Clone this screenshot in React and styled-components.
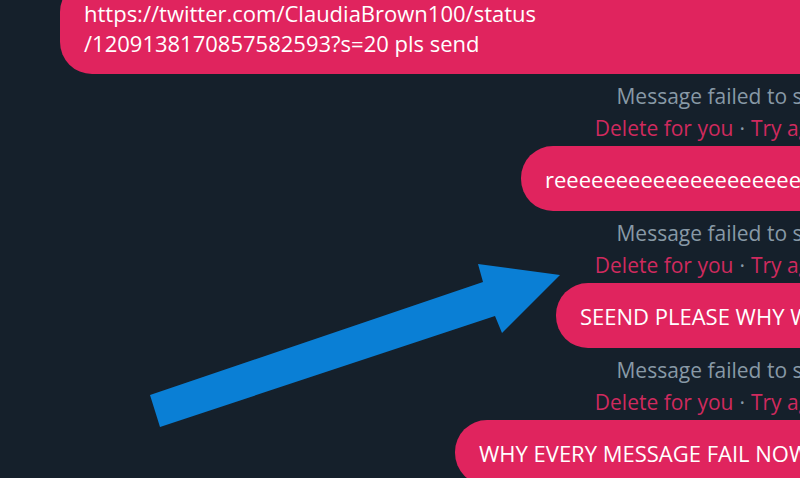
import styled, { createGlobalStyle } from 'styled-components'

const GlobalStyle = createGlobalStyle`
    html, body {
        margin: 0;
        padding: 0;
        background: #15202b;
    }
    body {
        font-family: "Open Sans", "Noto Sans", sans-serif;
    }
`

const messages = [
    { id: 1, lines: ['https://twitter.com/ClaudiaBrown100/status', '/1209138170857582593?s=20 pls send'], width: 780 },
    { id: 2, lines: ['reeeeeeeeeeeeeeeeeeeeeeeeeeeeeeee'], width: 319 },
    { id: 3, lines: ['SEEND PLEASE WHY WONT IT SEND'], width: 284 },
    { id: 4, lines: ['WHY EVERY MESSAGE FAIL NOW'], width: 385 },
]

const Arrow = () => (
    <ArrowSvg width="800" height="478" viewBox="0 0 800 478">
        <polygon
            points="150,395 483,282 478,264 560,275 502,333 495,316 160,427"
            fill="#0a7fd5"
        />
    </ArrowSvg>
)

const App = () => {
    return (
        <Page>
            <GlobalStyle />
            <Thread>
                {messages.map((msg, index) => (
                    <Group key={msg.id}>
                        <Bubble $width={msg.width}>
                            {msg.lines.map((line, i) => (
                                <Line key={i}>{line}</Line>
                            ))}
                        </Bubble>
                        {index < messages.length - 1 && (
                            <Meta>
                                <Failed>Message failed to send</Failed>
                                <Actions>
                                    <ActionLink>Delete for you</ActionLink>
                                    <Dot>·</Dot>
                                    <ActionLink>Try again</ActionLink>
                                </Actions>
                            </Meta>
                        )}
                    </Group>
                ))}
            </Thread>
            <Arrow />
        </Page>
    )
}

const Page = styled.div`
    position: relative;
    width: 800px;
    height: 478px;
    overflow: hidden;
    background: #15202b;
`

const Thread = styled.div`
    width: 840px;
    margin-top: -20px;
    display: flex;
    flex-direction: column;
    align-items: flex-end;
`

const Group = styled.div`
    display: flex;
    flex-direction: column;
    align-items: flex-end;
    width: 100%;
`

const Bubble = styled.div`
    box-sizing: border-box;
    width: ${props => props.$width}px;
    padding: 18px 24px 16px;
    border-radius: 32px;
    background: #e0245e;
    color: #ffffff;
    font-size: 22px;
    line-height: 30px;
    overflow: hidden;
    white-space: nowrap;
    min-height: 65px;
`

const Line = styled.div``

const Meta = styled.div`
    display: flex;
    flex-direction: column;
    align-items: flex-end;
    padding: 6px 0 2px;
    font-size: 21px;
    line-height: 32px;
    white-space: nowrap;
`

const Failed = styled.span`
    color: #8899a6;
`

const Actions = styled.div`
    display: flex;
    gap: 6px;
`

const ActionLink = styled.span`
    color: #cf2a5e;
`

const Dot = styled.span`
    color: #8899a6;
`

const ArrowSvg = styled.svg`
    position: absolute;
    left: 0;
    top: 0;
    pointer-events: none;
`

export default App
